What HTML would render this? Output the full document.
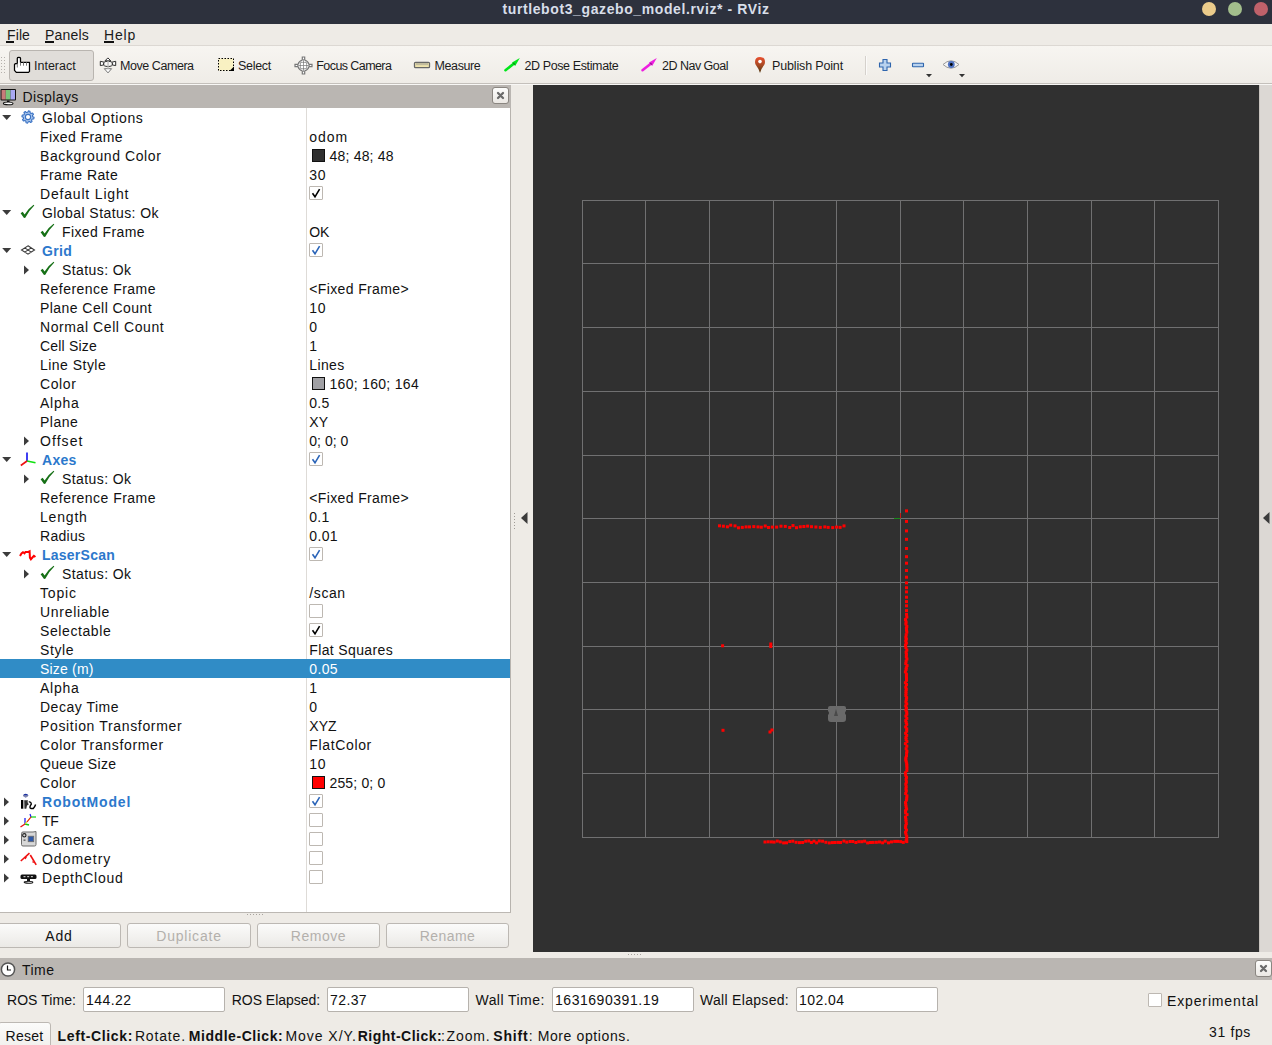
<!DOCTYPE html>
<html><head><meta charset="utf-8"><style>
html,body{margin:0;padding:0;}
body{width:1272px;height:1045px;position:relative;overflow:hidden;background:#eeebe6;font-family:"Liberation Sans",sans-serif;}
.t{position:absolute;white-space:pre;}
svg{overflow:visible}
</style></head><body>
<div style="position:absolute;left:0;top:0;width:1272px;height:24px;background:#2d313d"></div>
<div class="t" style="left:502.5px;top:2.15px;font-size:14px;line-height:14px;letter-spacing:0.604px;color:#d8dee9;font-weight:bold;">turtlebot3_gazebo_model.rviz* - RViz</div>
<div style="position:absolute;left:1202px;top:2px;width:14px;height:14px;border-radius:50%;background:#ebcb8b"></div>
<div style="position:absolute;left:1228px;top:2px;width:14px;height:14px;border-radius:50%;background:#a3be8c"></div>
<div style="position:absolute;left:1254px;top:2px;width:14px;height:14px;border-radius:50%;background:#bf616a"></div>
<div style="position:absolute;left:0;top:24px;width:1272px;height:21px;background:#eeebe6;border-bottom:1px solid #dcd8d3"></div>
<div class="t" style="left:7px;top:28.15px;font-size:14px;line-height:14px;letter-spacing:0.113px;color:#1a1a1a;">File</div>
<div style="position:absolute;left:6px;top:41px;width:8px;height:2px;background:#111"></div>
<div class="t" style="left:45px;top:28.15px;font-size:14px;line-height:14px;letter-spacing:0.201px;color:#1a1a1a;">Panels</div>
<div style="position:absolute;left:45px;top:41px;width:9px;height:2px;background:#111"></div>
<div class="t" style="left:104px;top:28.15px;font-size:14px;line-height:14px;letter-spacing:0.805px;color:#1a1a1a;">Help</div>
<div style="position:absolute;left:104px;top:41px;width:10px;height:2px;background:#111"></div>
<div style="position:absolute;left:0;top:46px;width:1272px;height:37px;background:linear-gradient(#f7f5f1,#efece7);border-bottom:1px solid #c4c0bb"></div>
<div style="position:absolute;left:0;top:84px;width:1272px;height:1px;background:#f8f7f5"></div>
<div style="position:absolute;left:1px;top:57px;width:1px;height:1px;background:#b5b1ac"></div>
<div style="position:absolute;left:4px;top:57px;width:1px;height:1px;background:#b5b1ac"></div>
<div style="position:absolute;left:1px;top:60px;width:1px;height:1px;background:#b5b1ac"></div>
<div style="position:absolute;left:4px;top:60px;width:1px;height:1px;background:#b5b1ac"></div>
<div style="position:absolute;left:1px;top:63px;width:1px;height:1px;background:#b5b1ac"></div>
<div style="position:absolute;left:4px;top:63px;width:1px;height:1px;background:#b5b1ac"></div>
<div style="position:absolute;left:1px;top:66px;width:1px;height:1px;background:#b5b1ac"></div>
<div style="position:absolute;left:4px;top:66px;width:1px;height:1px;background:#b5b1ac"></div>
<div style="position:absolute;left:1px;top:69px;width:1px;height:1px;background:#b5b1ac"></div>
<div style="position:absolute;left:4px;top:69px;width:1px;height:1px;background:#b5b1ac"></div>
<div style="position:absolute;left:1px;top:72px;width:1px;height:1px;background:#b5b1ac"></div>
<div style="position:absolute;left:4px;top:72px;width:1px;height:1px;background:#b5b1ac"></div>
<div style="position:absolute;left:9px;top:50px;width:83px;height:29px;background:#e0ddd9;border:1px solid #b9b5b0;border-radius:3px"></div>
<div class="t" style="left:34px;top:60.42px;font-size:12.5px;line-height:12.5px;letter-spacing:0.004px;color:#1c1c1c;">Interact</div>
<div class="t" style="left:120px;top:60.42px;font-size:12.5px;line-height:12.5px;letter-spacing:-0.444px;color:#1c1c1c;">Move Camera</div>
<div class="t" style="left:238px;top:60.42px;font-size:12.5px;line-height:12.5px;letter-spacing:-0.292px;color:#1c1c1c;">Select</div>
<div class="t" style="left:316.3px;top:60.42px;font-size:12.5px;line-height:12.5px;letter-spacing:-0.581px;color:#1c1c1c;">Focus Camera</div>
<div class="t" style="left:434.6px;top:60.42px;font-size:12.5px;line-height:12.5px;letter-spacing:-0.418px;color:#1c1c1c;">Measure</div>
<div class="t" style="left:524.4px;top:60.42px;font-size:12.5px;line-height:12.5px;letter-spacing:-0.378px;color:#1c1c1c;">2D Pose Estimate</div>
<div class="t" style="left:662px;top:60.42px;font-size:12.5px;line-height:12.5px;letter-spacing:-0.506px;color:#1c1c1c;">2D Nav Goal</div>
<div class="t" style="left:772px;top:60.42px;font-size:12.5px;line-height:12.5px;letter-spacing:-0.153px;color:#1c1c1c;">Publish Point</div>
<div style="position:absolute;left:865px;top:56px;width:1px;height:19px;background:#d5d1cc"></div>
<div style="position:absolute;left:866px;top:56px;width:1px;height:19px;background:#fbfaf9"></div>
<svg style="position:absolute;left:11px;top:54px;" width="24" height="22" viewBox="0 0 24 22"><path d="M6.3,9.5 V4.2 Q6.3,3.4 7.9,3.4 Q9.5,3.4 9.5,4.2 V8.4 H18.5 V17.4 L17.5,18.4 H5.3 L3.5,16.3 V10.5 L4.5,9.5 Z" fill="#fff" stroke="#000" stroke-width="1.25" stroke-linejoin="round"/><path d="M6.3,9.5 V13.5 M9.5,8.4 V11.7 M12.5,8.4 V11.7 M15.5,8.4 V11.7" stroke="#7a7a7a" stroke-width="1"/></svg>
<svg style="position:absolute;left:96px;top:54px;" width="24" height="22" viewBox="0 0 24 22"><path d="M4.3,7.3 L8.2,8.2 L8.2,10.8 L4.3,11.6 Z M19.7,7.3 L15.8,8.2 L15.8,10.8 L19.7,11.6 Z" fill="#fff" stroke="#2a2a2a" stroke-width="1"/><path d="M9,6.8 L11.9,3.9 L14.8,6.8 Z" fill="#fff" stroke="#333" stroke-width="1"/><ellipse cx="12" cy="9.9" rx="4.6" ry="2.6" fill="#fff" fill-opacity="0.6" stroke="#333" stroke-width="1"/><path d="M8.3,14.7 L12,18.9 L15.6,14.7 Z" fill="#fff" stroke="#777" stroke-width="1"/><rect x="11.4" y="6.8" width="1.3" height="8" fill="#bbb"/></svg>
<svg style="position:absolute;left:217px;top:57px;" width="18" height="15" viewBox="0 0 18 15"><rect x="1.5" y="1.5" width="15" height="12" fill="#f9f1c2" stroke="#000" stroke-width="1" stroke-dasharray="1.5,1.5"/><path d="M17,9.5 L17,14 L12.5,14 Z" fill="#000"/></svg>
<svg style="position:absolute;left:294px;top:56px;" width="19" height="19" viewBox="0 0 19 19"><path d="M8.3,1 H10.7 V4 Q14,5 15,8.3 H18 V10.7 H15 Q14,14 10.7,15 V18 H8.3 V15 Q5,14 4,10.7 H1 V8.3 H4 Q5,5 8.3,4 Z" fill="#fff" stroke="#777" stroke-width="1.2"/><circle cx="9.5" cy="9.5" r="4" fill="none" stroke="#999" stroke-width="0.8" stroke-dasharray="1,1"/><path d="M9.5,3 V16 M3,9.5 H16" stroke="#888" stroke-width="0.8"/><rect x="6.5" y="6.5" width="6" height="6" fill="none" stroke="#666" stroke-width="1" stroke-dasharray="1,1"/></svg>
<svg style="position:absolute;left:413px;top:61px;" width="18" height="8" viewBox="0 0 18 8"><rect x="1.5" y="1.3" width="15" height="5.4" rx="1" fill="#efe4ad" stroke="#666" stroke-width="1.3"/><path d="M4,2 V4.2 M6,2 V4.2 M8,2 V4.2 M10,2 V4.2 M12,2 V4.2 M14,2 V4.2" stroke="#8a8a8a" stroke-width="0.9"/></svg>
<svg style="position:absolute;left:504px;top:57px;" width="17" height="15" viewBox="0 0 17 15"><path d="M1.5,13.2 L10,6.5" stroke="#00e61a" stroke-width="2.6" stroke-linecap="round"/><path d="M15.8,1 L8,5.5 L11.2,9 Z" fill="#00e61a"/><path d="M9.2,5.8 L10.8,7.5" stroke="#0a8a1a" stroke-width="1.2"/></svg>
<svg style="position:absolute;left:641px;top:57px;" width="17" height="15" viewBox="0 0 17 15"><path d="M1.5,13.2 L10,6.5" stroke="#ee1ee0" stroke-width="2.6" stroke-linecap="round"/><path d="M15.8,1 L8,5.5 L11.2,9 Z" fill="#ee1ee0"/><path d="M9.2,5.8 L10.8,7.5" stroke="#8a1a8a" stroke-width="1.2"/></svg>
<svg style="position:absolute;left:754px;top:56px" width="12" height="18" viewBox="0 0 12 18"><defs><linearGradient id="pg" x1="0" y1="0" x2="0" y2="1"><stop offset="0" stop-color="#ea4f2e"/><stop offset="0.5" stop-color="#a94a25"/><stop offset="1" stop-color="#4e3710"/></linearGradient></defs><path d="M6,17 Q5,13 2.2,9.5 Q1,8 1,6 Q1,1 6,1 Q11,1 11,6 Q11,8 9.8,9.5 Q7,13 6,17 Z" fill="url(#pg)"/><circle cx="6" cy="5.6" r="1.8" fill="#fff"/></svg>
<svg style="position:absolute;left:878px;top:58px;" width="14" height="14" viewBox="0 0 14 14"><path d="M5,1.5 H9 V5 H12.5 V9 H9 V12.5 H5 V9 H1.5 V5 H5 Z" fill="#b9d2ee" stroke="#2f65ad" stroke-width="1.1"/></svg>
<svg style="position:absolute;left:911px;top:62px;" width="14" height="6" viewBox="0 0 14 6"><rect x="1.5" y="1.2" width="11" height="3.6" rx="0.5" fill="#b9d2ee" stroke="#2f65ad" stroke-width="1.1"/></svg>
<svg style="position:absolute;left:925px;top:73px;" width="8" height="5" viewBox="0 0 8 5"><path d="M1,1 H7 L4,4.2 Z" fill="#333"/></svg>
<svg style="position:absolute;left:942px;top:58px;" width="18" height="13" viewBox="0 0 18 13"><path d="M1,6.5 Q9,-1 17,6.5 Q9,14 1,6.5 Z" fill="#f5f5f5" stroke="#999" stroke-width="1"/><circle cx="9.3" cy="6.5" r="3.4" fill="#4f72c2"/><circle cx="9.3" cy="6.5" r="1.4" fill="#000"/></svg>
<svg style="position:absolute;left:958px;top:73px;" width="8" height="5" viewBox="0 0 8 5"><path d="M1,1 H7 L4,4.2 Z" fill="#333"/></svg>
<div style="position:absolute;left:0;top:85px;width:511px;height:23px;background:#bab6b2"></div>
<svg style="position:absolute;left:0px;top:88px;" width="17" height="18" viewBox="0 0 17 18"><rect x="0.5" y="1" width="15.5" height="11.5" rx="1" fill="#111"/><rect x="1.5" y="2" width="4.3" height="9.5" fill="#c87a7a"/><rect x="5.8" y="2" width="4.7" height="9.5" fill="#7ac47a"/><rect x="10.5" y="2" width="4.5" height="9.5" fill="#a8a8f2"/><rect x="7" y="12.5" width="2.5" height="2" fill="#111"/><ellipse cx="8.2" cy="15.4" rx="4.8" ry="1.4" fill="#fff" stroke="#111" stroke-width="1.1"/></svg>
<div class="t" style="left:22.6px;top:90.15px;font-size:14px;line-height:14px;letter-spacing:0.397px;color:#111;">Displays</div>
<div style="position:absolute;left:492px;top:87px;width:15px;height:15px;border:1px solid #8a8681;border-radius:3px;background:linear-gradient(#fdfdfc,#ebe8e4)"></div>
<svg style="position:absolute;left:492px;top:87px;" width="17" height="17" viewBox="0 0 17 17"><path d="M6,6 L11,11 M11,6 L6,11" stroke="#6a6a6a" stroke-width="2.3" stroke-linecap="round"/></svg>
<div style="position:absolute;left:0;top:108px;width:510px;height:804px;background:#fff;border-right:1px solid #b7b3ae;border-bottom:1px solid #bcb8b3"></div>
<div style="position:absolute;left:306px;top:108px;width:1px;height:804px;background:#dedbd7"></div>
<div style="position:absolute;left:0;top:659px;width:510px;height:19px;background:#308cc6"></div>
<svg style="position:absolute;left:2px;top:114px;" width="10" height="7" viewBox="0 0 10 7"><path d="M0.2,1 H9.2 L4.7,6 Z" fill="#3c3c3c"/></svg>
<svg style="position:absolute;left:21px;top:109.5px;" width="14" height="14" viewBox="0 0 14 14"><path d="M13.09,7.37 L12.77,8.99 L11.23,9.06 L10.52,10.12 L11.05,11.56 L9.67,12.49 L8.53,11.44 L7.28,11.69 L6.63,13.09 L5.01,12.77 L4.94,11.23 L3.88,10.52 L2.44,11.05 L1.51,9.67 L2.56,8.53 L2.31,7.28 L0.91,6.63 L1.23,5.01 L2.77,4.94 L3.48,3.88 L2.95,2.44 L4.33,1.51 L5.47,2.56 L6.72,2.31 L7.37,0.91 L8.99,1.23 L9.06,2.77 L10.12,3.48 L11.56,2.95 L12.49,4.33 L11.44,5.47 L11.69,6.72 Z" fill="#a8c4ea" stroke="#3b73c4" stroke-width="1.1" stroke-linejoin="round"/><circle cx="7" cy="7" r="2.6" fill="#fff" stroke="#3b73c4" stroke-width="1.1"/></svg>
<div class="t" style="left:42px;top:111.15px;font-size:14px;line-height:14px;letter-spacing:0.630px;color:#111;">Global Options</div>
<div class="t" style="left:40px;top:130.15px;font-size:14px;line-height:14px;letter-spacing:0.392px;color:#111;">Fixed Frame</div>
<div class="t" style="left:309.3px;top:130.15px;font-size:14px;line-height:14px;letter-spacing:0.974px;color:#111;">odom</div>
<div class="t" style="left:40px;top:149.15px;font-size:14px;line-height:14px;letter-spacing:0.584px;color:#111;">Background Color</div>
<div style="position:absolute;left:312px;top:149px;width:11px;height:11px;border:1px solid #111;background:#303030"></div>
<div class="t" style="left:329.5px;top:149.15px;font-size:14px;line-height:14px;letter-spacing:0.198px;color:#111;">48; 48; 48</div>
<div class="t" style="left:40px;top:168.15px;font-size:14px;line-height:14px;letter-spacing:0.423px;color:#111;">Frame Rate</div>
<div class="t" style="left:309.3px;top:168.15px;font-size:14px;line-height:14px;letter-spacing:0.619px;color:#111;">30</div>
<div class="t" style="left:40px;top:187.15px;font-size:14px;line-height:14px;letter-spacing:0.817px;color:#111;">Default Light</div>
<div style="position:absolute;left:309px;top:185.8px;width:12px;height:12px;border:1px solid #bdb8b2;background:#fff;border-radius:1px"></div><svg style="position:absolute;left:309px;top:185.8px;" width="14" height="14" viewBox="0 0 14 14"><path d="M3.5,7.3 L6,10.8 L10.6,3.2" fill="none" stroke="#000" stroke-width="1.6"/></svg>
<svg style="position:absolute;left:2px;top:209px;" width="10" height="7" viewBox="0 0 10 7"><path d="M0.2,1 H9.2 L4.7,6 Z" fill="#3c3c3c"/></svg>
<svg style="position:absolute;left:18px;top:203px;" width="18" height="17" viewBox="0 0 18 17"><path d="M2.6,10.3 L4.7,8.7 L6.6,11.6 Q10,5.6 15.6,1.7 L16.3,2.6 Q11,7.6 7.3,14.7 L6,15 Z" fill="#167016"/></svg>
<div class="t" style="left:42px;top:206.15px;font-size:14px;line-height:14px;letter-spacing:0.429px;color:#111;">Global Status: Ok</div>
<svg style="position:absolute;left:38px;top:222px;" width="18" height="17" viewBox="0 0 18 17"><path d="M2.6,10.3 L4.7,8.7 L6.6,11.6 Q10,5.6 15.6,1.7 L16.3,2.6 Q11,7.6 7.3,14.7 L6,15 Z" fill="#167016"/></svg>
<div class="t" style="left:62px;top:225.15px;font-size:14px;line-height:14px;letter-spacing:0.392px;color:#111;">Fixed Frame</div>
<div class="t" style="left:309.3px;top:225.15px;font-size:14px;line-height:14px;letter-spacing:-0.105px;color:#111;">OK</div>
<svg style="position:absolute;left:2px;top:247px;" width="10" height="7" viewBox="0 0 10 7"><path d="M0.2,1 H9.2 L4.7,6 Z" fill="#3c3c3c"/></svg>
<svg style="position:absolute;left:21px;top:244.5px;" width="15" height="11" viewBox="0 0 15 11"><path d="M7,0.8 L13.5,5 L7,9.2 L0.5,5 Z M3.75,2.9 L10.25,7.1 M10.25,2.9 L3.75,7.1" fill="none" stroke="#3a3a3a" stroke-width="1.1"/></svg>
<div class="t" style="left:42px;top:244.15px;font-size:14px;line-height:14px;letter-spacing:0.317px;color:#2c78cc;font-weight:bold;">Grid</div>
<div style="position:absolute;left:309px;top:242.8px;width:12px;height:12px;border:1px solid #bdb8b2;background:#fff;border-radius:1px"></div><svg style="position:absolute;left:309px;top:242.8px;" width="14" height="14" viewBox="0 0 14 14"><path d="M3.5,7.3 L6,10.8 L10.6,3.2" fill="none" stroke="#2a64b8" stroke-width="1.6"/></svg>
<svg style="position:absolute;left:23px;top:265px;" width="7" height="10" viewBox="0 0 7 10"><path d="M1,0.5 V9.5 L6,5 Z" fill="#3c3c3c"/></svg>
<svg style="position:absolute;left:38px;top:260px;" width="18" height="17" viewBox="0 0 18 17"><path d="M2.6,10.3 L4.7,8.7 L6.6,11.6 Q10,5.6 15.6,1.7 L16.3,2.6 Q11,7.6 7.3,14.7 L6,15 Z" fill="#167016"/></svg>
<div class="t" style="left:62px;top:263.15px;font-size:14px;line-height:14px;letter-spacing:0.415px;color:#111;">Status: Ok</div>
<div class="t" style="left:40px;top:282.15px;font-size:14px;line-height:14px;letter-spacing:0.472px;color:#111;">Reference Frame</div>
<div class="t" style="left:309.3px;top:282.15px;font-size:14px;line-height:14px;letter-spacing:0.367px;color:#111;">&lt;Fixed Frame&gt;</div>
<div class="t" style="left:40px;top:301.15px;font-size:14px;line-height:14px;letter-spacing:0.441px;color:#111;">Plane Cell Count</div>
<div class="t" style="left:309.3px;top:301.15px;font-size:14px;line-height:14px;letter-spacing:0.619px;color:#111;">10</div>
<div class="t" style="left:40px;top:320.15px;font-size:14px;line-height:14px;letter-spacing:0.581px;color:#111;">Normal Cell Count</div>
<div class="t" style="left:309.3px;top:320.15px;font-size:14px;line-height:14px;letter-spacing:0.619px;color:#111;">0</div>
<div class="t" style="left:40px;top:339.15px;font-size:14px;line-height:14px;letter-spacing:0.195px;color:#111;">Cell Size</div>
<div class="t" style="left:309.3px;top:339.15px;font-size:14px;line-height:14px;letter-spacing:0.619px;color:#111;">1</div>
<div class="t" style="left:40px;top:358.15px;font-size:14px;line-height:14px;letter-spacing:0.473px;color:#111;">Line Style</div>
<div class="t" style="left:309.3px;top:358.15px;font-size:14px;line-height:14px;letter-spacing:0.377px;color:#111;">Lines</div>
<div class="t" style="left:40px;top:377.15px;font-size:14px;line-height:14px;letter-spacing:0.614px;color:#111;">Color</div>
<div style="position:absolute;left:312px;top:377px;width:11px;height:11px;border:1px solid #111;background:#a0a0a4"></div>
<div class="t" style="left:329.5px;top:377.15px;font-size:14px;line-height:14px;letter-spacing:0.295px;color:#111;">160; 160; 164</div>
<div class="t" style="left:40px;top:396.15px;font-size:14px;line-height:14px;letter-spacing:0.728px;color:#111;">Alpha</div>
<div class="t" style="left:309.3px;top:396.15px;font-size:14px;line-height:14px;letter-spacing:0.261px;color:#111;">0.5</div>
<div class="t" style="left:40px;top:415.15px;font-size:14px;line-height:14px;letter-spacing:0.470px;color:#111;">Plane</div>
<div class="t" style="left:309.3px;top:415.15px;font-size:14px;line-height:14px;letter-spacing:0.031px;color:#111;">XY</div>
<svg style="position:absolute;left:23px;top:436px;" width="7" height="10" viewBox="0 0 7 10"><path d="M1,0.5 V9.5 L6,5 Z" fill="#3c3c3c"/></svg>
<div class="t" style="left:40px;top:434.15px;font-size:14px;line-height:14px;letter-spacing:1.063px;color:#111;">Offset</div>
<div class="t" style="left:309.3px;top:434.15px;font-size:14px;line-height:14px;letter-spacing:0.018px;color:#111;">0; 0; 0</div>
<svg style="position:absolute;left:2px;top:456px;" width="10" height="7" viewBox="0 0 10 7"><path d="M0.2,1 H9.2 L4.7,6 Z" fill="#3c3c3c"/></svg>
<svg style="position:absolute;left:20px;top:452px;" width="17" height="16" viewBox="0 0 17 16"><path d="M7,9 V0.5" stroke="#1010ee" stroke-width="1.6"/><path d="M7,9 L15.5,10.8" stroke="#10e010" stroke-width="1.6"/><path d="M7,9 L0.8,13.5" stroke="#ee1010" stroke-width="1.6"/></svg>
<div class="t" style="left:42px;top:453.15px;font-size:14px;line-height:14px;letter-spacing:0.282px;color:#2c78cc;font-weight:bold;">Axes</div>
<div style="position:absolute;left:309px;top:451.8px;width:12px;height:12px;border:1px solid #bdb8b2;background:#fff;border-radius:1px"></div><svg style="position:absolute;left:309px;top:451.8px;" width="14" height="14" viewBox="0 0 14 14"><path d="M3.5,7.3 L6,10.8 L10.6,3.2" fill="none" stroke="#2a64b8" stroke-width="1.6"/></svg>
<svg style="position:absolute;left:23px;top:474px;" width="7" height="10" viewBox="0 0 7 10"><path d="M1,0.5 V9.5 L6,5 Z" fill="#3c3c3c"/></svg>
<svg style="position:absolute;left:38px;top:469px;" width="18" height="17" viewBox="0 0 18 17"><path d="M2.6,10.3 L4.7,8.7 L6.6,11.6 Q10,5.6 15.6,1.7 L16.3,2.6 Q11,7.6 7.3,14.7 L6,15 Z" fill="#167016"/></svg>
<div class="t" style="left:62px;top:472.15px;font-size:14px;line-height:14px;letter-spacing:0.415px;color:#111;">Status: Ok</div>
<div class="t" style="left:40px;top:491.15px;font-size:14px;line-height:14px;letter-spacing:0.472px;color:#111;">Reference Frame</div>
<div class="t" style="left:309.3px;top:491.15px;font-size:14px;line-height:14px;letter-spacing:0.367px;color:#111;">&lt;Fixed Frame&gt;</div>
<div class="t" style="left:40px;top:510.15px;font-size:14px;line-height:14px;letter-spacing:0.815px;color:#111;">Length</div>
<div class="t" style="left:309.3px;top:510.15px;font-size:14px;line-height:14px;letter-spacing:0.261px;color:#111;">0.1</div>
<div class="t" style="left:40px;top:529.15px;font-size:14px;line-height:14px;letter-spacing:0.297px;color:#111;">Radius</div>
<div class="t" style="left:309.3px;top:529.15px;font-size:14px;line-height:14px;letter-spacing:0.350px;color:#111;">0.01</div>
<svg style="position:absolute;left:2px;top:551px;" width="10" height="7" viewBox="0 0 10 7"><path d="M0.2,1 H9.2 L4.7,6 Z" fill="#3c3c3c"/></svg>
<svg style="position:absolute;left:16px;top:546px;" width="24" height="16" viewBox="0 0 24 16"><path d="M4,10 L5.5,7.5 L7,6.2 L8.5,7.3 L9.5,6 L12.3,6 L13.6,5.3 L13.9,11.6 L14.9,13.3 L16.4,11.5 L17.9,9.8 L19.4,11" fill="none" stroke="#ff0000" stroke-width="2"/></svg>
<div class="t" style="left:42px;top:548.15px;font-size:14px;line-height:14px;letter-spacing:0.239px;color:#2c78cc;font-weight:bold;">LaserScan</div>
<div style="position:absolute;left:309px;top:546.8px;width:12px;height:12px;border:1px solid #bdb8b2;background:#fff;border-radius:1px"></div><svg style="position:absolute;left:309px;top:546.8px;" width="14" height="14" viewBox="0 0 14 14"><path d="M3.5,7.3 L6,10.8 L10.6,3.2" fill="none" stroke="#2a64b8" stroke-width="1.6"/></svg>
<svg style="position:absolute;left:23px;top:569px;" width="7" height="10" viewBox="0 0 7 10"><path d="M1,0.5 V9.5 L6,5 Z" fill="#3c3c3c"/></svg>
<svg style="position:absolute;left:38px;top:564px;" width="18" height="17" viewBox="0 0 18 17"><path d="M2.6,10.3 L4.7,8.7 L6.6,11.6 Q10,5.6 15.6,1.7 L16.3,2.6 Q11,7.6 7.3,14.7 L6,15 Z" fill="#167016"/></svg>
<div class="t" style="left:62px;top:567.15px;font-size:14px;line-height:14px;letter-spacing:0.415px;color:#111;">Status: Ok</div>
<div class="t" style="left:40px;top:586.15px;font-size:14px;line-height:14px;letter-spacing:0.834px;color:#111;">Topic</div>
<div class="t" style="left:309.3px;top:586.15px;font-size:14px;line-height:14px;letter-spacing:0.599px;color:#111;">/scan</div>
<div class="t" style="left:40px;top:605.15px;font-size:14px;line-height:14px;letter-spacing:0.700px;color:#111;">Unreliable</div>
<div style="position:absolute;left:309px;top:603.8px;width:12px;height:12px;border:1px solid #bdb8b2;background:#fff;border-radius:1px"></div>
<div class="t" style="left:40px;top:624.15px;font-size:14px;line-height:14px;letter-spacing:0.592px;color:#111;">Selectable</div>
<div style="position:absolute;left:309px;top:622.8px;width:12px;height:12px;border:1px solid #bdb8b2;background:#fff;border-radius:1px"></div><svg style="position:absolute;left:309px;top:622.8px;" width="14" height="14" viewBox="0 0 14 14"><path d="M3.5,7.3 L6,10.8 L10.6,3.2" fill="none" stroke="#000" stroke-width="1.6"/></svg>
<div class="t" style="left:40px;top:643.15px;font-size:14px;line-height:14px;letter-spacing:0.594px;color:#111;">Style</div>
<div class="t" style="left:309.3px;top:643.15px;font-size:14px;line-height:14px;letter-spacing:0.363px;color:#111;">Flat Squares</div>
<div class="t" style="left:40px;top:662.15px;font-size:14px;line-height:14px;letter-spacing:0.186px;color:#fff;">Size (m)</div>
<div class="t" style="left:309.3px;top:662.15px;font-size:14px;line-height:14px;letter-spacing:0.350px;color:#fff;">0.05</div>
<div class="t" style="left:40px;top:681.15px;font-size:14px;line-height:14px;letter-spacing:0.728px;color:#111;">Alpha</div>
<div class="t" style="left:309.3px;top:681.15px;font-size:14px;line-height:14px;letter-spacing:0.619px;color:#111;">1</div>
<div class="t" style="left:40px;top:700.15px;font-size:14px;line-height:14px;letter-spacing:0.511px;color:#111;">Decay Time</div>
<div class="t" style="left:309.3px;top:700.15px;font-size:14px;line-height:14px;letter-spacing:0.619px;color:#111;">0</div>
<div class="t" style="left:40px;top:719.15px;font-size:14px;line-height:14px;letter-spacing:0.652px;color:#111;">Position Transformer</div>
<div class="t" style="left:309.3px;top:719.15px;font-size:14px;line-height:14px;letter-spacing:0.072px;color:#111;">XYZ</div>
<div class="t" style="left:40px;top:738.15px;font-size:14px;line-height:14px;letter-spacing:0.642px;color:#111;">Color Transformer</div>
<div class="t" style="left:309.3px;top:738.15px;font-size:14px;line-height:14px;letter-spacing:0.644px;color:#111;">FlatColor</div>
<div class="t" style="left:40px;top:757.15px;font-size:14px;line-height:14px;letter-spacing:0.319px;color:#111;">Queue Size</div>
<div class="t" style="left:309.3px;top:757.15px;font-size:14px;line-height:14px;letter-spacing:0.619px;color:#111;">10</div>
<div class="t" style="left:40px;top:776.15px;font-size:14px;line-height:14px;letter-spacing:0.614px;color:#111;">Color</div>
<div style="position:absolute;left:312px;top:776px;width:11px;height:11px;border:1px solid #111;background:#ff0000"></div>
<div class="t" style="left:329.5px;top:776.15px;font-size:14px;line-height:14px;letter-spacing:0.151px;color:#111;">255; 0; 0</div>
<svg style="position:absolute;left:3px;top:797px;" width="7" height="10" viewBox="0 0 7 10"><path d="M1,0.5 V9.5 L6,5 Z" fill="#3c3c3c"/></svg>
<svg style="position:absolute;left:16px;top:790px;" width="24" height="22" viewBox="0 0 24 22"><ellipse cx="9.7" cy="5.6" rx="2.5" ry="1.8" fill="#1a2fa0"/><rect x="7.3" y="5.6" width="4.8" height="0.9" fill="#e8e0c0"/><rect x="5" y="10" width="2.3" height="8.7" fill="#000"/><rect x="7.3" y="10.5" width="1.3" height="8" fill="#aaa"/><path d="M8.3,10.2 H12 L11.5,12 L12.8,14.5 L11,15.5 L10.3,18.7 H8.6 Z" fill="#333"/><path d="M12.8,12 Q15,11.5 15.3,14 L14.2,16 Q13.5,18.5 15,18.5 H17.3 Q18.8,17 19.6,14.5" stroke="#000" stroke-width="1.4" fill="none"/></svg>
<div class="t" style="left:42px;top:795.15px;font-size:14px;line-height:14px;letter-spacing:0.834px;color:#2c78cc;font-weight:bold;">RobotModel</div>
<div style="position:absolute;left:309px;top:793.8px;width:12px;height:12px;border:1px solid #bdb8b2;background:#fff;border-radius:1px"></div><svg style="position:absolute;left:309px;top:793.8px;" width="14" height="14" viewBox="0 0 14 14"><path d="M3.5,7.3 L6,10.8 L10.6,3.2" fill="none" stroke="#2a64b8" stroke-width="1.6"/></svg>
<svg style="position:absolute;left:3px;top:816px;" width="7" height="10" viewBox="0 0 7 10"><path d="M1,0.5 V9.5 L6,5 Z" fill="#3c3c3c"/></svg>
<svg style="position:absolute;left:20px;top:813px;" width="17" height="15" viewBox="0 0 17 15"><path d="M5,11 V5" stroke="#2020ee" stroke-width="1.3"/><path d="M5,11 L9,12" stroke="#10d010" stroke-width="1.3"/><path d="M5,11 L0.5,14" stroke="#ee1010" stroke-width="1.3"/><path d="M5,11 L11,4" stroke="#e0e010" stroke-width="1.1"/><path d="M11,4 L10,1" stroke="#2020ee" stroke-width="1.2"/><path d="M11,4 L16,4" stroke="#10d010" stroke-width="1.2"/><path d="M7,9 L11,4" stroke="#ee1010" stroke-width="1.1"/></svg>
<div class="t" style="left:42px;top:814.15px;font-size:14px;line-height:14px;letter-spacing:-0.289px;color:#111;">TF</div>
<div style="position:absolute;left:309px;top:812.8px;width:12px;height:12px;border:1px solid #bdb8b2;background:#fff;border-radius:1px"></div>
<svg style="position:absolute;left:3px;top:835px;" width="7" height="10" viewBox="0 0 7 10"><path d="M1,0.5 V9.5 L6,5 Z" fill="#3c3c3c"/></svg>
<svg style="position:absolute;left:20px;top:831px;" width="17" height="16" viewBox="0 0 17 16"><path d="M1.5,2.5 Q1.5,1 3,1 H13 L16,0.5 V13.5 Q16,15 14.5,15 H3 Q1.5,15 1.5,13.5 Z" fill="#d8d8d8" stroke="#6b6b6b" stroke-width="1"/><rect x="8.2" y="5.2" width="5.5" height="5.5" fill="#2f59a8" stroke="#6b6b6b" stroke-width="0.8"/><circle cx="4.3" cy="4.3" r="1.7" fill="none" stroke="#222" stroke-width="1.1"/><rect x="3.5" y="8.5" width="2" height="1.3" fill="#555"/></svg>
<div class="t" style="left:42px;top:833.15px;font-size:14px;line-height:14px;letter-spacing:0.443px;color:#111;">Camera</div>
<div style="position:absolute;left:309px;top:831.8px;width:12px;height:12px;border:1px solid #bdb8b2;background:#fff;border-radius:1px"></div>
<svg style="position:absolute;left:3px;top:854px;" width="7" height="10" viewBox="0 0 7 10"><path d="M1,0.5 V9.5 L6,5 Z" fill="#3c3c3c"/></svg>
<svg style="position:absolute;left:20px;top:852px;" width="17" height="14" viewBox="0 0 17 14"><path d="M0.8,9 L9.5,1.2" stroke="#ee1010" stroke-width="1.6"/><path d="M10.3,3 L16.2,12.8" stroke="#ee1010" stroke-width="1.6"/><path d="M4,5.2 L7.2,4.6 L5.6,7.4 Z M12.8,8.5 L14.5,11 L12.3,10.4 Z" fill="#ee1010"/></svg>
<div class="t" style="left:42px;top:852.15px;font-size:14px;line-height:14px;letter-spacing:0.979px;color:#111;">Odometry</div>
<div style="position:absolute;left:309px;top:850.8px;width:12px;height:12px;border:1px solid #bdb8b2;background:#fff;border-radius:1px"></div>
<svg style="position:absolute;left:3px;top:873px;" width="7" height="10" viewBox="0 0 7 10"><path d="M1,0.5 V9.5 L6,5 Z" fill="#3c3c3c"/></svg>
<svg style="position:absolute;left:20px;top:874px;" width="17" height="11" viewBox="0 0 17 11"><rect x="0.5" y="0.5" width="16" height="4.5" rx="1.5" fill="#111"/><path d="M3.5,2.7 H5.5 M7.2,2.7 H9.2 M10.9,2.7 H12.9" stroke="#fff" stroke-width="0.9"/><rect x="7" y="5" width="3" height="2.5" fill="#111"/><ellipse cx="8.5" cy="8.2" rx="4.3" ry="1" fill="#fff" stroke="#111" stroke-width="1.1"/></svg>
<div class="t" style="left:42px;top:871.15px;font-size:14px;line-height:14px;letter-spacing:0.772px;color:#111;">DepthCloud</div>
<div style="position:absolute;left:309px;top:869.8px;width:12px;height:12px;border:1px solid #bdb8b2;background:#fff;border-radius:1px"></div>
<div style="position:absolute;left:247px;top:914px;width:1px;height:1px;background:#a8a49f"></div>
<div style="position:absolute;left:250px;top:914px;width:1px;height:1px;background:#a8a49f"></div>
<div style="position:absolute;left:253px;top:914px;width:1px;height:1px;background:#a8a49f"></div>
<div style="position:absolute;left:256px;top:914px;width:1px;height:1px;background:#a8a49f"></div>
<div style="position:absolute;left:259px;top:914px;width:1px;height:1px;background:#a8a49f"></div>
<div style="position:absolute;left:262px;top:914px;width:1px;height:1px;background:#a8a49f"></div>
<div style="position:absolute;left:-3px;top:923px;width:122px;height:23px;border:1px solid #bcb8b3;border-radius:3px;background:linear-gradient(#fbfbfa,#ebe9e6)"></div><div class="t" style="left:45.275px;top:929.15px;font-size:14px;line-height:14px;letter-spacing:0.848px;color:#111;">Add</div>
<div style="position:absolute;left:127px;top:923px;width:122px;height:23px;border:1px solid #bcb8b3;border-radius:3px;background:linear-gradient(#fbfbfa,#ebe9e6)"></div><div class="t" style="left:156.315px;top:929.15px;font-size:14px;line-height:14px;letter-spacing:0.781px;color:#b3b0ac;">Duplicate</div>
<div style="position:absolute;left:257px;top:923px;width:121px;height:23px;border:1px solid #bcb8b3;border-radius:3px;background:linear-gradient(#fbfbfa,#ebe9e6)"></div><div class="t" style="left:290.8325px;top:929.15px;font-size:14px;line-height:14px;letter-spacing:0.538px;color:#b3b0ac;">Remove</div>
<div style="position:absolute;left:386px;top:923px;width:121px;height:23px;border:1px solid #bcb8b3;border-radius:3px;background:linear-gradient(#fbfbfa,#ebe9e6)"></div><div class="t" style="left:419.69px;top:929.15px;font-size:14px;line-height:14px;letter-spacing:0.455px;color:#b3b0ac;">Rename</div>
<svg style="position:absolute;left:520px;top:511px;" width="9" height="14" viewBox="0 0 9 14"><path d="M7.5,1 V13 L1,7 Z" fill="#3b3b3b"/></svg>
<div style="position:absolute;left:514px;top:513px;width:1px;height:1px;background:#9f9b96"></div>
<div style="position:absolute;left:514px;top:516px;width:1px;height:1px;background:#9f9b96"></div>
<div style="position:absolute;left:514px;top:519px;width:1px;height:1px;background:#9f9b96"></div>
<div style="position:absolute;left:514px;top:522px;width:1px;height:1px;background:#9f9b96"></div>
<div style="position:absolute;left:514px;top:525px;width:1px;height:1px;background:#9f9b96"></div>
<div style="position:absolute;left:514px;top:528px;width:1px;height:1px;background:#9f9b96"></div>
<div style="position:absolute;left:1259px;top:85px;width:13px;height:867px;background:#dcd8d4;border-left:1px solid #c9c5c0"></div>
<svg style="position:absolute;left:1262px;top:511px;" width="9" height="14" viewBox="0 0 9 14"><path d="M7.5,1 V13 L1,7 Z" fill="#3b3b3b"/></svg>
<div style="position:absolute;left:533px;top:85px;width:726px;height:867px;background:#303030"></div>
<svg style="position:absolute;left:533px;top:85px" width="726" height="866" viewBox="0 0 726 866"><g stroke="#707071" stroke-width="1" shape-rendering="crispEdges"><line x1="49.5" y1="115" x2="49.5" y2="753"/><line x1="112.5" y1="115" x2="112.5" y2="753"/><line x1="176.5" y1="115" x2="176.5" y2="753"/><line x1="240.5" y1="115" x2="240.5" y2="753"/><line x1="303.5" y1="115" x2="303.5" y2="753"/><line x1="367.5" y1="115" x2="367.5" y2="753"/><line x1="430.5" y1="115" x2="430.5" y2="753"/><line x1="494.5" y1="115" x2="494.5" y2="753"/><line x1="558.5" y1="115" x2="558.5" y2="753"/><line x1="621.5" y1="115" x2="621.5" y2="753"/><line x1="685.5" y1="115" x2="685.5" y2="753"/><line x1="49" y1="115.5" x2="686" y2="115.5"/><line x1="49" y1="178.5" x2="686" y2="178.5"/><line x1="49" y1="242.5" x2="686" y2="242.5"/><line x1="49" y1="306.5" x2="686" y2="306.5"/><line x1="49" y1="370.5" x2="686" y2="370.5"/><line x1="49" y1="433.5" x2="686" y2="433.5"/><line x1="49" y1="497.5" x2="686" y2="497.5"/><line x1="49" y1="561.5" x2="686" y2="561.5"/><line x1="49" y1="624.5" x2="686" y2="624.5"/><line x1="49" y1="688.5" x2="686" y2="688.5"/><line x1="49" y1="752.5" x2="686" y2="752.5"/></g><path d="M367.5,433.5 V428" stroke="#c81818" stroke-width="1"/><path d="M367.5,433.5 H361" stroke="#1a8a1a" stroke-width="1"/><g fill="#f00"><rect x="185.0" y="439.3" width="3" height="3"/><rect x="188.9" y="439.7" width="3" height="3"/><rect x="192.9" y="440.3" width="3" height="3"/><rect x="196.2" y="438.7" width="3" height="3"/><rect x="200.5" y="439.4" width="3" height="3"/><rect x="204.0" y="441.3" width="3" height="3"/><rect x="207.8" y="440.9" width="3" height="3"/><rect x="211.6" y="440.4" width="3" height="3"/><rect x="215.0" y="440.4" width="3" height="3"/><rect x="219.3" y="440.1" width="3" height="3"/><rect x="223.5" y="440.4" width="3" height="3"/><rect x="226.8" y="440.7" width="3" height="3"/><rect x="230.7" y="439.5" width="3" height="3"/><rect x="234.0" y="441.0" width="3" height="3"/><rect x="237.8" y="440.6" width="3" height="3"/><rect x="242.1" y="440.6" width="3" height="3"/><rect x="246.5" y="439.7" width="3" height="3"/><rect x="250.8" y="439.9" width="3" height="3"/><rect x="255.2" y="441.0" width="3" height="3"/><rect x="258.5" y="439.1" width="3" height="3"/><rect x="262.0" y="441.2" width="3" height="3"/><rect x="265.8" y="440.3" width="3" height="3"/><rect x="269.4" y="440.0" width="3" height="3"/><rect x="273.1" y="439.6" width="3" height="3"/><rect x="277.0" y="440.2" width="3" height="3"/><rect x="281.4" y="440.5" width="3" height="3"/><rect x="285.8" y="440.9" width="3" height="3"/><rect x="290.3" y="440.4" width="3" height="3"/><rect x="293.7" y="440.9" width="3" height="3"/><rect x="298.2" y="441.1" width="3" height="3"/><rect x="302.1" y="440.6" width="3" height="3"/><rect x="305.6" y="440.9" width="3" height="3"/><rect x="309.5" y="439.4" width="3" height="3"/><rect x="372.0" y="424.4" width="3" height="3"/><rect x="372.0" y="434.9" width="3" height="3"/><rect x="372.0" y="444.4" width="3" height="3"/><rect x="372.0" y="452.8" width="3" height="3"/><rect x="372.0" y="462.0" width="3" height="3"/><rect x="372.0" y="470.2" width="3" height="3"/><rect x="372.0" y="476.7" width="3" height="3"/><rect x="372.0" y="484.0" width="3" height="3"/><rect x="372.0" y="490.7" width="3" height="3"/><rect x="372.0" y="496.4" width="3" height="3"/><rect x="372.0" y="501.2" width="3" height="3"/><rect x="372.0" y="505.4" width="3" height="3"/><rect x="372.0" y="510.7" width="3" height="3"/><rect x="372.0" y="515.1" width="3" height="3"/><rect x="372.0" y="519.3" width="3" height="3"/><rect x="372.0" y="524.1" width="3" height="3"/><rect x="372.0" y="527.9" width="3" height="3"/><rect x="372.3" y="530.5" width="3" height="3"/><rect x="371.0" y="533.1" width="3" height="3"/><rect x="371.6" y="535.5" width="3" height="3"/><rect x="371.4" y="537.5" width="3" height="3"/><rect x="372.3" y="539.9" width="3" height="3"/><rect x="371.9" y="541.7" width="3" height="3"/><rect x="372.0" y="543.5" width="3" height="3"/><rect x="372.3" y="545.6" width="3" height="3"/><rect x="371.7" y="548.2" width="3" height="3"/><rect x="371.4" y="550.8" width="3" height="3"/><rect x="371.9" y="552.6" width="3" height="3"/><rect x="371.2" y="554.5" width="3" height="3"/><rect x="371.9" y="556.6" width="3" height="3"/><rect x="371.0" y="558.5" width="3" height="3"/><rect x="371.4" y="561.0" width="3" height="3"/><rect x="372.3" y="563.6" width="3" height="3"/><rect x="371.6" y="565.7" width="3" height="3"/><rect x="371.9" y="567.9" width="3" height="3"/><rect x="371.8" y="570.2" width="3" height="3"/><rect x="372.4" y="572.5" width="3" height="3"/><rect x="371.6" y="574.7" width="3" height="3"/><rect x="371.3" y="577.1" width="3" height="3"/><rect x="372.5" y="579.1" width="3" height="3"/><rect x="371.8" y="581.3" width="3" height="3"/><rect x="371.6" y="583.1" width="3" height="3"/><rect x="370.9" y="585.4" width="3" height="3"/><rect x="371.9" y="587.7" width="3" height="3"/><rect x="371.9" y="589.5" width="3" height="3"/><rect x="372.0" y="591.7" width="3" height="3"/><rect x="372.0" y="593.8" width="3" height="3"/><rect x="370.9" y="596.2" width="3" height="3"/><rect x="372.0" y="598.0" width="3" height="3"/><rect x="371.3" y="600.6" width="3" height="3"/><rect x="371.8" y="602.8" width="3" height="3"/><rect x="371.5" y="604.8" width="3" height="3"/><rect x="371.5" y="606.9" width="3" height="3"/><rect x="371.4" y="609.1" width="3" height="3"/><rect x="372.1" y="611.2" width="3" height="3"/><rect x="371.8" y="613.1" width="3" height="3"/><rect x="371.4" y="615.5" width="3" height="3"/><rect x="372.2" y="617.4" width="3" height="3"/><rect x="371.2" y="619.4" width="3" height="3"/><rect x="372.0" y="621.6" width="3" height="3"/><rect x="371.4" y="623.5" width="3" height="3"/><rect x="372.2" y="625.5" width="3" height="3"/><rect x="372.3" y="627.7" width="3" height="3"/><rect x="371.4" y="629.6" width="3" height="3"/><rect x="372.3" y="631.9" width="3" height="3"/><rect x="371.3" y="634.1" width="3" height="3"/><rect x="371.7" y="636.0" width="3" height="3"/><rect x="372.2" y="637.9" width="3" height="3"/><rect x="371.2" y="640.4" width="3" height="3"/><rect x="372.2" y="642.4" width="3" height="3"/><rect x="372.2" y="644.7" width="3" height="3"/><rect x="371.1" y="646.8" width="3" height="3"/><rect x="372.2" y="648.9" width="3" height="3"/><rect x="371.5" y="650.9" width="3" height="3"/><rect x="371.6" y="653.0" width="3" height="3"/><rect x="372.4" y="655.1" width="3" height="3"/><rect x="370.9" y="657.1" width="3" height="3"/><rect x="372.3" y="659.6" width="3" height="3"/><rect x="371.6" y="662.2" width="3" height="3"/><rect x="372.4" y="664.8" width="3" height="3"/><rect x="372.1" y="666.7" width="3" height="3"/><rect x="372.0" y="669.2" width="3" height="3"/><rect x="371.4" y="671.4" width="3" height="3"/><rect x="371.3" y="673.5" width="3" height="3"/><rect x="371.8" y="675.4" width="3" height="3"/><rect x="372.2" y="677.4" width="3" height="3"/><rect x="372.3" y="679.2" width="3" height="3"/><rect x="372.4" y="681.6" width="3" height="3"/><rect x="372.3" y="684.1" width="3" height="3"/><rect x="370.9" y="686.3" width="3" height="3"/><rect x="371.2" y="688.7" width="3" height="3"/><rect x="372.0" y="690.8" width="3" height="3"/><rect x="371.6" y="693.0" width="3" height="3"/><rect x="371.9" y="695.6" width="3" height="3"/><rect x="371.3" y="697.6" width="3" height="3"/><rect x="371.7" y="700.1" width="3" height="3"/><rect x="371.5" y="702.5" width="3" height="3"/><rect x="371.8" y="704.5" width="3" height="3"/><rect x="371.2" y="707.0" width="3" height="3"/><rect x="372.4" y="709.4" width="3" height="3"/><rect x="372.2" y="711.8" width="3" height="3"/><rect x="371.9" y="713.6" width="3" height="3"/><rect x="371.0" y="716.1" width="3" height="3"/><rect x="371.3" y="718.1" width="3" height="3"/><rect x="371.6" y="720.4" width="3" height="3"/><rect x="372.1" y="722.5" width="3" height="3"/><rect x="371.0" y="724.3" width="3" height="3"/><rect x="371.1" y="726.3" width="3" height="3"/><rect x="372.5" y="728.1" width="3" height="3"/><rect x="371.0" y="730.6" width="3" height="3"/><rect x="371.4" y="732.8" width="3" height="3"/><rect x="371.5" y="734.8" width="3" height="3"/><rect x="371.8" y="737.2" width="3" height="3"/><rect x="371.2" y="739.2" width="3" height="3"/><rect x="371.1" y="741.3" width="3" height="3"/><rect x="372.0" y="743.6" width="3" height="3"/><rect x="371.0" y="745.7" width="3" height="3"/><rect x="371.5" y="747.6" width="3" height="3"/><rect x="372.2" y="749.9" width="3" height="3"/><rect x="372.2" y="752.0" width="3" height="3"/><rect x="371.6" y="754.3" width="3" height="3"/><rect x="230.5" y="755.5" width="3" height="3"/><rect x="233.7" y="755.3" width="3" height="3"/><rect x="236.9" y="755.4" width="3" height="3"/><rect x="239.6" y="755.6" width="3" height="3"/><rect x="242.8" y="754.6" width="3" height="3"/><rect x="245.8" y="755.4" width="3" height="3"/><rect x="249.1" y="756.4" width="3" height="3"/><rect x="252.0" y="756.3" width="3" height="3"/><rect x="255.3" y="755.0" width="3" height="3"/><rect x="258.3" y="754.7" width="3" height="3"/><rect x="261.6" y="755.8" width="3" height="3"/><rect x="265.0" y="756.1" width="3" height="3"/><rect x="268.1" y="756.0" width="3" height="3"/><rect x="271.2" y="754.7" width="3" height="3"/><rect x="274.3" y="754.5" width="3" height="3"/><rect x="276.9" y="756.0" width="3" height="3"/><rect x="279.5" y="754.7" width="3" height="3"/><rect x="282.1" y="756.3" width="3" height="3"/><rect x="284.8" y="754.5" width="3" height="3"/><rect x="288.1" y="754.7" width="3" height="3"/><rect x="291.4" y="755.8" width="3" height="3"/><rect x="294.8" y="756.4" width="3" height="3"/><rect x="297.9" y="756.1" width="3" height="3"/><rect x="300.4" y="756.0" width="3" height="3"/><rect x="303.4" y="755.9" width="3" height="3"/><rect x="306.0" y="756.0" width="3" height="3"/><rect x="309.4" y="754.6" width="3" height="3"/><rect x="312.3" y="755.6" width="3" height="3"/><rect x="315.6" y="755.0" width="3" height="3"/><rect x="318.3" y="755.0" width="3" height="3"/><rect x="321.4" y="756.0" width="3" height="3"/><rect x="324.3" y="755.2" width="3" height="3"/><rect x="327.2" y="755.2" width="3" height="3"/><rect x="330.1" y="754.7" width="3" height="3"/><rect x="333.1" y="756.4" width="3" height="3"/><rect x="336.0" y="756.0" width="3" height="3"/><rect x="338.7" y="755.9" width="3" height="3"/><rect x="341.9" y="755.8" width="3" height="3"/><rect x="345.0" y="755.5" width="3" height="3"/><rect x="348.1" y="756.3" width="3" height="3"/><rect x="350.7" y="754.7" width="3" height="3"/><rect x="354.0" y="756.3" width="3" height="3"/><rect x="357.0" y="755.4" width="3" height="3"/><rect x="360.2" y="754.9" width="3" height="3"/><rect x="363.0" y="754.9" width="3" height="3"/><rect x="366.1" y="755.1" width="3" height="3"/><rect x="368.8" y="755.9" width="3" height="3"/><rect x="372.3" y="755.1" width="3" height="3"/><rect x="188.1" y="559.3" width="3" height="3"/><rect x="236.3" y="557.5" width="3" height="3"/><rect x="236.3" y="560.0" width="3" height="3"/><rect x="188.5" y="643.8" width="3" height="3"/><rect x="235.5" y="645.5" width="3" height="3"/><rect x="237.5" y="643.5" width="3" height="3"/></g><path d="M297,621 Q295,621 295,623 V626 Q297,628 295,630 V634 Q295,637 298,637 H310 Q313,637 313,634 V630 Q311,628 313,626 V623 Q313,621 311,621 Z" fill="#6a6a6a"/><path d="M303,624 L305,631 H301 Z" fill="#4a4a4a"/></svg>
<div style="position:absolute;left:628px;top:954px;width:1px;height:1px;background:#a8a49f"></div>
<div style="position:absolute;left:631px;top:954px;width:1px;height:1px;background:#a8a49f"></div>
<div style="position:absolute;left:634px;top:954px;width:1px;height:1px;background:#a8a49f"></div>
<div style="position:absolute;left:637px;top:954px;width:1px;height:1px;background:#a8a49f"></div>
<div style="position:absolute;left:640px;top:954px;width:1px;height:1px;background:#a8a49f"></div>
<div style="position:absolute;left:0;top:958px;width:1272px;height:22px;background:#bab6b2"></div>
<svg style="position:absolute;left:0px;top:961px;" width="17" height="17" viewBox="0 0 17 17"><circle cx="8" cy="8.5" r="6.6" fill="#fff" stroke="#555" stroke-width="1.5"/><path d="M7.5,4.5 V9 H11" fill="none" stroke="#111" stroke-width="1.2"/></svg>
<div class="t" style="left:22px;top:963.15px;font-size:14px;line-height:14px;letter-spacing:0.459px;color:#111;">Time</div>
<div style="position:absolute;left:1255px;top:960px;width:15px;height:15px;border:1px solid #8a8681;border-radius:3px;background:linear-gradient(#fdfdfc,#ebe8e4)"></div>
<svg style="position:absolute;left:1255px;top:960px;" width="17" height="17" viewBox="0 0 17 17"><path d="M6,6 L11,11 M11,6 L6,11" stroke="#6a6a6a" stroke-width="2.3" stroke-linecap="round"/></svg>
<div class="t" style="left:7px;top:993.15px;font-size:14px;line-height:14px;letter-spacing:0.061px;color:#111;">ROS Time:</div>
<div style="position:absolute;left:83px;top:987px;width:140px;height:23px;border:1px solid #b6b2ad;border-radius:2px;background:#fff"></div><div class="t" style="left:86px;top:993.15px;font-size:14px;line-height:14px;letter-spacing:0.440px;color:#111;">144.22</div>
<div class="t" style="left:231.8px;top:993.15px;font-size:14px;line-height:14px;letter-spacing:-0.042px;color:#111;">ROS Elapsed:</div>
<div style="position:absolute;left:327px;top:987px;width:140px;height:23px;border:1px solid #b6b2ad;border-radius:2px;background:#fff"></div><div class="t" style="left:330px;top:993.15px;font-size:14px;line-height:14px;letter-spacing:0.404px;color:#111;">72.37</div>
<div class="t" style="left:475.5px;top:993.15px;font-size:14px;line-height:14px;letter-spacing:0.439px;color:#111;">Wall Time:</div>
<div style="position:absolute;left:552px;top:987px;width:140px;height:23px;border:1px solid #b6b2ad;border-radius:2px;background:#fff"></div><div class="t" style="left:555px;top:993.15px;font-size:14px;line-height:14px;letter-spacing:0.536px;color:#111;">1631690391.19</div>
<div class="t" style="left:700px;top:993.15px;font-size:14px;line-height:14px;letter-spacing:0.303px;color:#111;">Wall Elapsed:</div>
<div style="position:absolute;left:796px;top:987px;width:140px;height:23px;border:1px solid #b6b2ad;border-radius:2px;background:#fff"></div><div class="t" style="left:799px;top:993.15px;font-size:14px;line-height:14px;letter-spacing:0.440px;color:#111;">102.04</div>
<div style="position:absolute;left:1148px;top:993px;width:12px;height:12px;border:1px solid #bdb8b2;background:#fff;border-radius:1px"></div>
<div class="t" style="left:1167px;top:993.65px;font-size:14px;line-height:14px;letter-spacing:0.861px;color:#111;">Experimental</div>
<div style="position:absolute;left:-2px;top:1022px;width:51px;height:30px;border:1px solid #bcb8b3;border-radius:3px;background:linear-gradient(#fbfbfa,#efedea)"></div>
<div class="t" style="left:5.5px;top:1029.15px;font-size:14px;line-height:14px;letter-spacing:0.292px;color:#111;">Reset</div>
<div class="t" style="left:57.5px;top:1028.65px;font-size:14px;line-height:14px;letter-spacing:0.645px;color:#111;font-weight:bold;">Left-Click:</div>
<div class="t" style="left:134.9px;top:1028.65px;font-size:14px;line-height:14px;letter-spacing:0.839px;color:#111;">Rotate.</div>
<div class="t" style="left:188.7px;top:1028.65px;font-size:14px;line-height:14px;letter-spacing:0.571px;color:#111;font-weight:bold;">Middle-Click:</div>
<div class="t" style="left:285.4px;top:1028.65px;font-size:14px;line-height:14px;letter-spacing:0.969px;color:#111;">Move X/Y.</div>
<div class="t" style="left:357.7px;top:1028.65px;font-size:14px;line-height:14px;letter-spacing:0.499px;color:#111;font-weight:bold;">Right-Click:</div>
<div class="t" style="left:441px;top:1028.65px;font-size:14px;line-height:14px;letter-spacing:-1.891px;color:#111;">:</div>
<div class="t" style="left:446.6px;top:1028.65px;font-size:14px;line-height:14px;letter-spacing:0.849px;color:#111;">Zoom.</div>
<div class="t" style="left:493.3px;top:1028.65px;font-size:14px;line-height:14px;letter-spacing:0.821px;color:#111;font-weight:bold;">Shift</div>
<div class="t" style="left:528.7px;top:1028.65px;font-size:14px;line-height:14px;letter-spacing:0.609px;color:#111;">: More options.</div>
<div class="t" style="left:1209px;top:1025.15px;font-size:14px;line-height:14px;letter-spacing:0.646px;color:#111;">31 fps</div>
</body></html>
